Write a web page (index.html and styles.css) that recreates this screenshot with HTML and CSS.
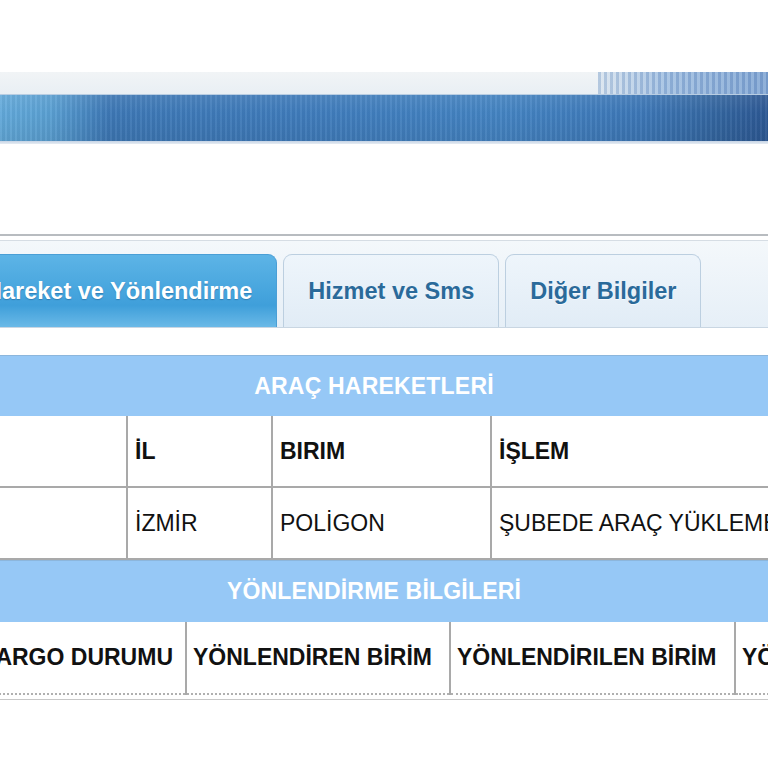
FILE: index.html
```html
<!DOCTYPE html>
<html lang="tr">
<head>
<meta charset="utf-8">
<title>Kargo Takip</title>
<link rel="stylesheet" href="styles.css">
</head>
<body>
<div class="banner">
  <div class="banner-top"><div class="banner-stripes"></div></div>
  <div class="banner-band"></div>
  <div class="banner-edge"></div>
</div>

<div class="rules"></div>

<div class="tabbar">
  <div class="tabs">
    <div class="tab active">Hareket ve Yönlendirme</div>
    <div class="tab">Hizmet ve Sms</div>
    <div class="tab">Diğer Bilgiler</div>
  </div>
</div>

<table class="grid grid-a">
  <colgroup><col class="a0"><col class="a1"><col class="a2"><col class="a3"></colgroup>
  <tr><td class="caption" colspan="4">ARAÇ HAREKETLERİ</td></tr>
  <tr class="row"><th></th><th>İL</th><th>BIRIM</th><th>İŞLEM</th></tr>
  <tr class="row"><td></td><td>İZMİR</td><td>POLİGON</td><td>ŞUBEDE ARAÇ YÜKLEME</td></tr>
</table>

<table class="grid grid-b">
  <colgroup><col class="b0"><col class="b1"><col class="b2"><col class="b3"></colgroup>
  <tr><td class="caption" colspan="4">YÖNLENDİRME BİLGİLERİ</td></tr>
  <tr class="row"><th class="lead">KARGO DURUMU</th><th>YÖNLENDİREN BİRİM</th><th>YÖNLENDİRILEN BİRİM</th><th>YÖNLENDİRME</th></tr>
</table>
<div class="tail"></div>
</body>
</html>
```

FILE: styles.css
```css
html, body {
  margin: 0;
  padding: 0;
  background: #ffffff;
  overflow: hidden;
  font-family: "Liberation Sans", Arial, sans-serif;
}
body {
  width: 768px;
  height: 768px;
}

/* banner */
.banner {
  margin-top: 72px;
}
.banner-top {
  height: 22px;
  background: linear-gradient(to bottom, #f1f4f6, #e9eff4);
  display: flex;
  justify-content: flex-end;
}
.banner-stripes {
  width: 170px;
  height: 100%;
  background:
    repeating-linear-gradient(to right, rgba(150,180,215,0.55) 0 3px, rgba(215,228,242,0.3) 3px 6px),
    linear-gradient(to right, rgba(233,239,244,1), rgba(180,205,232,1) 40%, rgba(150,182,220,1));
  background-blend-mode: multiply;
}
.banner-band {
  height: 46px;
  border-top: 1px solid #b9cde2;
  background:
    repeating-linear-gradient(to right, rgba(255,255,255,0.05) 0 2px, rgba(0,0,0,0.04) 2px 5px),
    linear-gradient(to bottom, rgba(255,255,255,0.08), rgba(0,0,0,0) 40%, rgba(0,0,0,0.06)),
    linear-gradient(to right, #62a9da 0px, #5aa0d3 50px, #3d78b6 110px, #3f7cbc 300px, #4484c3 500px, #3d78b8 640px, #33659f 720px, #2d5996 768px);
}
.banner-edge {
  height: 3px;
  background: linear-gradient(to bottom, #c5d3e4, #e6ecf3);
}

/* rules */
.rules {
  margin-top: 90px;
  height: 4px;
  border-top: 2px solid #b8bcc0;
  border-bottom: 1px solid #d6dde4;
}

/* tabs */
.tabbar {
  height: 73px;
  padding-top: 13px;
  background: linear-gradient(to bottom, #f4f8fb, #e6eff7);
  border-bottom: 1px solid #c9d6e2;
}
.tabs {
  display: flex;
  gap: 6px;
  margin-left: -40px;
  height: 73px;
}
.tab {
  box-sizing: border-box;
  height: 73px;
  padding: 0 24px;
  display: flex;
  align-items: center;
  font-size: 23.5px;
  font-weight: bold;
  color: #2a6a9a;
  text-shadow: 0 1px 0 rgba(255,255,255,0.6);
  white-space: nowrap;
  border: 1px solid #bccfe0;
  border-bottom: none;
  border-radius: 9px 9px 0 0;
  background: linear-gradient(to bottom, #eef5fb, #e1ecf6);
}
.tab.active {
  color: #ffffff;
  text-shadow: 0 1px 1px rgba(30,90,140,0.5);
  border-color: #4a9fd6;
  background: linear-gradient(to bottom, #5db4e6 0%, #45a4dd 55%, #3f9fda 70%, #6ab9e7 100%);
}

/* tables */
.grid {
  border-collapse: collapse;
  table-layout: fixed;
  width: 1254px;
  margin-left: -254px;
  font-size: 23px;
}
.grid-a { margin-top: 27px; }
.a0 { width: 380px; }
.a1 { width: 145px; }
.a2 { width: 219px; }
.a3 { width: 510px; }
.b0 { width: 439px; }
.b1 { width: 264px; }
.b2 { width: 285px; }
.b3 { width: 266px; }

.caption {
  height: 60px;
  padding: 0;
  background: #96c8f6;
  border-top: 1px solid #8cb6dc;
  color: #ffffff;
  font-weight: bold;
  text-align: center;
  letter-spacing: 0.2px;
}
.grid-b .caption {
  height: 61px;
}
.row th, .row td {
  height: 70px;
  padding: 0 7px;
  border: 2px solid #a9a9a9;
  border-top: none;
  text-align: left;
  white-space: nowrap;
  overflow: hidden;
  color: #111111;
}
.row th {
  font-weight: bold;
}
.row td {
  font-weight: normal;
}
.grid-b .row th {
  height: 71px;
  padding: 0 6px;
}
.grid-b .row th.lead {
  text-align: right;
  padding-right: 12px;
}
.grid-b .row th, .grid-b .row td {
  border-bottom: 2px dotted #b0b0b0;
}
.tail {
  margin-top: 4px;
  height: 0;
  border-top: 1px solid #c8c8c8;
}
```
